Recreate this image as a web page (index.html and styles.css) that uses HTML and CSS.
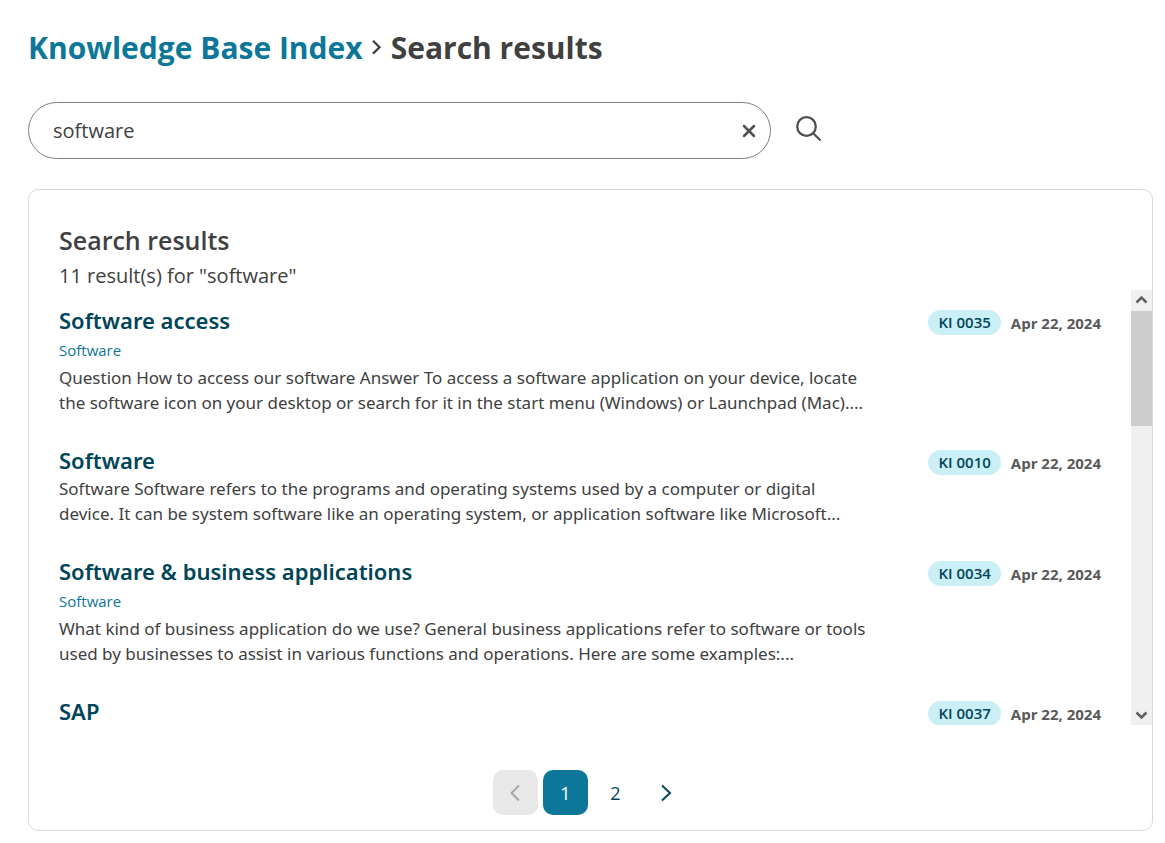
FILE: index.html
```html
<!DOCTYPE html>
<html lang="en">
<head>
<meta charset="utf-8">
<title>Knowledge Base Index - Search results</title>
<link rel="stylesheet" href="styles.css">
</head>
<body>
<main class="page">
  <h1 class="crumbs">
    <a class="crumb-link" href="#">Knowledge Base Index</a>
    <svg class="crumb-sep" viewBox="0 0 10 16" aria-hidden="true"><path d="M1 .800 7.500 7.200 1 13.600"/></svg>
    <span>Search results</span>
  </h1>

  <form class="search" role="search">
    <div class="search-box">
      <input class="search-input" type="text" aria-label="Search" value="software">
      <button class="icon-button" type="button" aria-label="Clear">
        <svg class="clear-icon" viewBox="0 0 14 14"><path d="M2 2l10 10M12 2 2 12"/></svg>
      </button>
    </div>
    <button class="icon-button" type="submit" aria-label="Search">
      <svg class="search-icon" viewBox="0 0 26 26"><circle cx="10.500" cy="10.500" r="9.300"/><path d="M17.200 17.200 24.500 24.500"/></svg>
    </button>
  </form>

  <section class="card">
    <header class="card-head">
      <h2 class="card-title">Search results</h2>
      <p class="card-count">11 result(s) for "software"</p>
    </header>

    <div class="scroll-area">
      <ul class="results">
        <li class="result">
          <div class="result-body">
            <a class="result-title" href="#">Software access</a>
            <a class="result-category" href="#">Software</a>
            <p class="result-text">Question How to access our software Answer To access a software application on your device, locate the software icon on your desktop or search for it in the start menu (Windows) or Launchpad (Mac)....</p>
          </div>
          <div class="result-meta"><span class="badge">KI 0035</span><time class="date" datetime="2024-04-22">Apr 22, 2024</time></div>
        </li>
        <li class="result">
          <div class="result-body">
            <a class="result-title" href="#">Software</a>
            <p class="result-text">Software Software refers to the programs and operating systems used by a computer or digital device. It can be system software like an operating system, or application software like Microsoft...</p>
          </div>
          <div class="result-meta"><span class="badge">KI 0010</span><time class="date" datetime="2024-04-22">Apr 22, 2024</time></div>
        </li>
        <li class="result">
          <div class="result-body">
            <a class="result-title" href="#">Software &amp; business applications</a>
            <a class="result-category" href="#">Software</a>
            <p class="result-text">What kind of business application do we use? General business applications refer to software or tools used by businesses to assist in various functions and operations. Here are some examples:...</p>
          </div>
          <div class="result-meta"><span class="badge">KI 0034</span><time class="date" datetime="2024-04-22">Apr 22, 2024</time></div>
        </li>
        <li class="result">
          <div class="result-body">
            <a class="result-title" href="#">SAP</a>
          </div>
          <div class="result-meta"><span class="badge">KI 0037</span><time class="date" datetime="2024-04-22">Apr 22, 2024</time></div>
        </li>
      </ul>
      <div class="scrollbar" aria-hidden="true">
        <svg class="scroll-arrow" viewBox="0 0 21 21"><path d="M5.500 12.500 10.500 7.500l5 5"/></svg>
        <div class="scroll-track"><div class="scroll-thumb"></div></div>
        <svg class="scroll-arrow" viewBox="0 0 21 21"><path d="M5.500 8.500 10.500 13.500l5-5"/></svg>
      </div>
    </div>

    <nav class="pager" aria-label="Pagination">
      <button class="page-button" type="button" disabled aria-label="Previous page"><svg class="chevron" viewBox="0 0 12 18"><path d="M9 1.500 1.500 9 9 16.500"/></svg></button>
      <button class="page-button current" type="button" aria-current="page">1</button>
      <button class="page-button" type="button">2</button>
      <button class="page-button" type="button" aria-label="Next page"><svg class="chevron" viewBox="0 0 12 18"><path d="M2 1.500 10 9l-8 7.500"/></svg></button>
    </nav>
  </section>
</main>
</body>
</html>
```
FILE: styles.css
```css
* { box-sizing: border-box; }

body {
  margin: 0;
  background: #fff;
  color: #404040;
  font-family: "Open Sans", "Noto Sans", sans-serif;
  font-size: 18px;
}

h1, h2, p, ul { margin: 0; padding: 0; }

a { text-decoration: none; }

svg {
  display: block;
  fill: none;
  stroke: currentColor;
  stroke-width: 2;
}

button {
  padding: 0;
  border: 0;
  background: none;
  color: inherit;
  font: inherit;
  cursor: pointer;
}

.page { padding: 26px 12px 12px 28px; }

.crumbs {
  display: flex;
  align-items: center;
  gap: 9px;
  font-size: 30px;
  font-weight: 700;
  line-height: 44px;
}

.crumb-link { color: #0c7799; }

.crumb-sep { width: 10px; height: 16px; stroke-width: 2.3; }

.search {
  display: flex;
  align-items: center;
  gap: 25px;
  margin-top: 32px;
}

.search-box {
  display: flex;
  align-items: center;
  width: 66%;
  height: 57px;
  padding: 0 14px 0 24px;
  border: 1px solid #808080;
  border-radius: 29px;
}

.search-input {
  flex: 1;
  min-width: 0;
  padding: 0;
  border: 0;
  outline: 0;
  background: none;
  color: #404040;
  font: inherit;
  font-size: 20px;
}

.icon-button { color: #505050; }

.clear-icon { width: 14px; height: 14px; stroke-width: 2.5; stroke-linecap: round; }

.search-icon { width: 26px; height: 26px; margin-bottom: 4px; stroke-width: 2.3; }

.card {
  margin-top: 30px;
  padding: 30px 0 15px;
  border: 1px solid #d9d9d9;
  border-radius: 10px;
}

.card-head { padding: 0 30px; }

.card-title {
  font-size: 25px;
  font-weight: 600;
  line-height: 41px;
}

.card-count { font-size: 20px; line-height: 29px; }

.scroll-area { display: flex; height: 435px; }

.results {
  flex: 1;
  padding: 15px 30px 0;
  overflow: hidden;
  list-style: none;
}

.result {
  display: flex;
  justify-content: space-between;
  gap: 57px;
  padding-bottom: 30px;
}

.result-body { flex: 1; }

.result-title {
  display: block;
  color: #004558;
  font-family: "Noto Sans", sans-serif;
  font-size: 22px;
  font-weight: 600;
  line-height: 31px;
}

.result-category {
  display: block;
  color: #0c7799;
  font-size: 15px;
  line-height: 29px;
}

.result-text {
  font-family: "Noto Sans", sans-serif;
  font-size: 17px;
  line-height: 25px;
}

.result-meta {
  display: flex;
  align-items: flex-start;
  align-self: flex-start;
  gap: 10px;
  padding-top: 5px;
  font-size: 15px;
  line-height: 25px;
}

.badge {
  padding: 0 10px;
  border-radius: 13px;
  background: #caeff7;
  color: #004558;
  font-weight: 600;
}

.date { color: #595959; font-weight: 700; line-height: 27px; }

.scrollbar {
  display: flex;
  flex-direction: column;
  width: 21px;
  background: #f0f0f0;
  color: #606060;
}

.scroll-arrow { width: 21px; height: 21px; stroke-width: 2.5; }

.scroll-track { flex: 1; }

.scroll-thumb { height: 115px; background: #cdcdcd; }

.pager {
  display: flex;
  justify-content: center;
  gap: 5px;
  margin-top: 45px;
}

.page-button {
  display: flex;
  align-items: center;
  justify-content: center;
  width: 45px;
  height: 45px;
  border-radius: 10px;
  color: #004558;
}

.page-button:disabled { background: #e8e8e8; color: #a6a6a6; }

.page-button.current { background: #0c7799; color: #fff; }

.chevron { width: 12px; height: 18px; }
```
